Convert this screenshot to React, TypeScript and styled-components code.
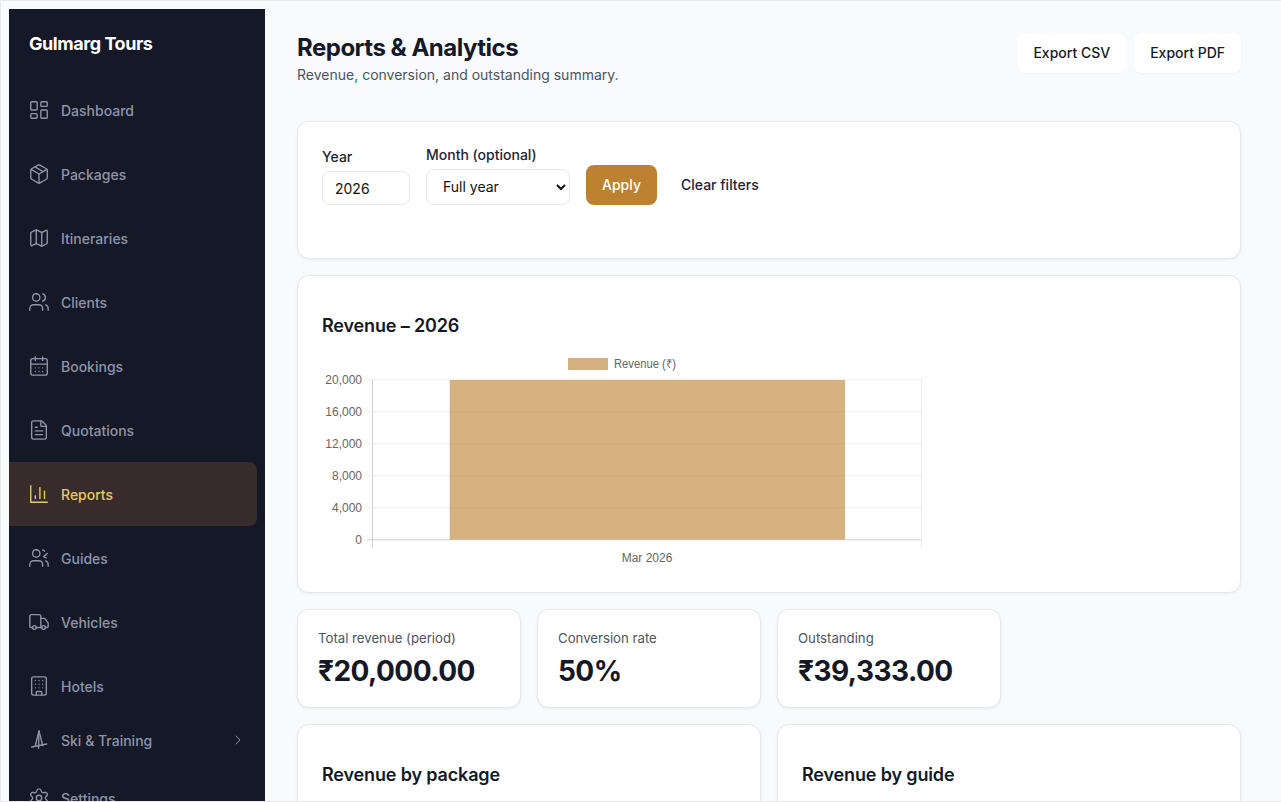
import React from 'react';
import styled, { createGlobalStyle } from 'styled-components';
import { LayoutDashboard, Package, Map, Users, CalendarDays, FileText, Truck, Building, ChevronRight, Settings } from 'lucide-react';

const Global = createGlobalStyle`
  html, body { margin: 0; height: 100%; overflow: hidden; }
  body { background: #fff; font-family: Inter, "Liberation Sans", sans-serif; color: #111827; }
  #root { height: 100%; }
`;
const Frame = styled.div`
  box-sizing: border-box; height: 802px; width: 1281px; overflow: hidden;
  border: solid #e5e7eb; border-width: 1px 0 1px 1px; padding: 8px 0 0 8px; display: flex; background: #f9fafb;
`;
const Sidebar = styled.aside`
  width: 256px; flex: none; background: #141827; height: 900px; display: flex; flex-direction: column;
`;
const Brand = styled.div`
  box-sizing: border-box; color: #fff; font-weight: 700; font-size: 18px; line-height: 28px; letter-spacing: -0.45px; padding: 21px 20px 0; height: 69px;
`;
const Nav = styled.nav`display: flex; flex-direction: column; padding-right: 8px;`;
const Item = styled.div<{ $active?: boolean; $short?: boolean }>`
  display: flex; align-items: center; gap: 12px; box-sizing: border-box;
  padding: 0 ${p => p.$short ? 11 : 20}px ${p => p.$short ? 4 : 0}px 20px;
  height: ${p => p.$short ? 48 : 64}px;
  font-size: 14px; font-weight: 500; color: ${p => p.$active ? '#e8cb63' : '#8f95a8'};
  background: ${p => p.$active ? '#372c2b' : 'transparent'};
  border-radius: 0 8px 8px 0;
  > svg { flex: none; margin: -1px; }
`;
const Label = styled.span`flex: 1;`;
const Chevron = styled(ChevronRight)`
  && { margin: 0; }
`;
const Main = styled.main`flex: 1; padding: 24px 40px 0 32px; background: #f9fafb; min-width: 0;`;
const Head = styled.header`display: flex; justify-content: space-between; align-items: flex-start; margin-bottom: 36px;`;
const Title = styled.h1`margin: 0; font-size: 24px; line-height: 30px; font-weight: 700; letter-spacing: -0.5px; color: #141827;`;
const Sub = styled.p`margin: 2px 0 0; font-size: 14px; line-height: 20px; color: #4b5563;`;
const Actions = styled.div`display: flex; gap: 8px;`;
const GhostBtn = styled.button`
  height: 40px; padding: 0 16px 1px; border: 0; border-radius: 8px; background: #fff; font: 500 14px Inter, sans-serif; color: #141827;
  box-shadow: 0 1px 2px rgba(0,0,0,.03);
`;
const Card = styled.section`
  box-sizing: border-box; background: #fff; border: 1px solid #e5e7eb; border-radius: 12px; box-shadow: 0 1px 3px rgba(0,0,0,.06);
`;
const FilterCard = styled(Card)`height: 138px; padding: 24px; display: flex; align-items: flex-start; gap: 16px; margin-bottom: 16px;`;
const Field = styled.label<{ $top: number }>`display: flex; flex-direction: column; gap: 4px; font-size: 14px; line-height: 20px; font-weight: 500; color: #1f2433; margin-top: ${p => p.$top}px;`;
const YearInput = styled.input`
  box-sizing: border-box; width: 88px; height: 34px; padding: 0 12px; border: 1px solid #e5e7eb; border-radius: 8px; font: 400 14px Inter, sans-serif; color: #111; background: #fff;
`;
const MonthSelect = styled.select`
  box-sizing: border-box; width: 144px; height: 36px; padding: 0 12px 1px; border: 1px solid #e5e7eb; border-radius: 8px; font: 400 14px Inter, sans-serif; color: #111; background: #fff;
`;
const Apply = styled.button`
  height: 40px; width: 71px; margin-top: 19px; padding: 0 0 1px; border: 0; border-radius: 8px; background: #bc8232; color: #fff; font: 500 14px Inter, sans-serif;
`;
const Clear = styled.button`
  height: 40px; margin-top: 19px; padding: 0 8px 2px; border: 0; background: transparent; color: #1f2433; font: 500 14px Inter, sans-serif;
`;
const ChartCard = styled(Card)`height: 318px; padding: 36px 24px 0; margin-bottom: 16px;`;
const CardTitle = styled.h2`margin: 0; font-size: 18px; line-height: 28px; font-weight: 600; letter-spacing: -0.15px; color: #141827;`;
const ChartSvg = styled.svg`display: block; margin: 15px 0 0 -2px; text { font-family: "Liberation Sans", Arial, sans-serif; font-size: 12px; fill: #666; }`;
const Stats = styled.div`display: flex; gap: 16px; margin-bottom: 16px;`;
const Stat = styled(Card)`width: 224px; height: 99px; padding: 19px 20px; `;
const StatLabel = styled.div`font-size: 13.2px; line-height: 18px; color: #4b5563; font-weight: 400;`;
const StatValue = styled.div`font-size: 28px; line-height: 36px; font-weight: 700; letter-spacing: -0.55px; color: #141827; margin-top: 6px;`;
const Bottom = styled.div`display: grid; grid-template-columns: 464px 464px; gap: 16px;`;
const BottomCard = styled(Card)`height: 200px; padding: 36px 24px;`;

const Ticks = [['20,000', 380], ['16,000', 412], ['12,000', 444], ['8,000', 476], ['4,000', 508], ['0', 540]] as const;
const Chart = () => (
  <ChartSvg width="620" height="210" viewBox="320 355 620 210">
    <rect x="568" y="358" width="40" height="12" fill="#d4b080" />
    <text x="614" y="368" textLength="62" lengthAdjust="spacingAndGlyphs">Revenue (₹)</text>
    {Ticks.map(([t, y]) => (
      <g key={t}>
        <line x1="367" x2="922" y1={y - .2} y2={y - .2} stroke={t === '0' ? '#cfcfcf' : '#ececec'} />
        <text x="362" y={y + 4} textAnchor="end">{t}</text>
      </g>
    ))}
    <line x1="372.5" x2="372.5" y1="380" y2="548" stroke="#cfcfcf" />
    <line x1="921.5" x2="921.5" y1="380" y2="548" stroke="#ececec" />
    <rect x="449.7" y="380" width="395.3" height="159.6" fill="#bc8232" fillOpacity=".62" />
    <text x="647" y="561.5" textAnchor="middle">Mar 2026</text>
  </ChartSvg>
);

const Svg = (props: { children: React.ReactNode }) => (
  <svg width="22" height="22" viewBox="0 0 24 24" fill="none" stroke="currentColor" strokeWidth="1.5" strokeLinecap="round" strokeLinejoin="round">{props.children}</svg>
);
const ReportsIcon = () => <Svg><path d="M3 3v18h18" /><path d="M18 17V9" /><path d="M13 17V5" /><path d="M8 17v-3" /></Svg>;
const GuidesIcon = () => (
  <Svg>
    <path d="M16 21v-2a4 4 0 0 0-4-4H6a4 4 0 0 0-4 4v2" />
    <circle cx="9" cy="7" r="4" />
    <path d="M22 21v-2a4 4 0 0 0-3-3.87" />
    <path d="M16 3.13a4 4 0 0 1 2 1.4" />
    <path d="M21 7l-4 3.5 3 1.5" />
  </Svg>
);
const SkiIcon = () => (
  <Svg>
    <path d="M12 2 8 18M12 2l4 16" />
    <path d="M12 2 11.5 21" />
    <path d="M4 19.6 20.4 16.4" />
  </Svg>
);

const icon = (I: typeof Package) => <I size={22} strokeWidth={1.5} />;
const items: [React.ReactNode, string][] = [
  [icon(LayoutDashboard), 'Dashboard'], [icon(Package), 'Packages'], [icon(Map), 'Itineraries'], [icon(Users), 'Clients'], [icon(CalendarDays), 'Bookings'], [icon(FileText), 'Quotations'], [<ReportsIcon />, 'Reports'], [<GuidesIcon />, 'Guides'], [icon(Truck), 'Vehicles'], [icon(Building), 'Hotels'],
];

export default function App() {
  return (
    <Frame>
      <Global />
      <Sidebar>
        <Brand>Gulmarg Tours</Brand>
        <Nav>
          {items.map(([I, t]) => (
            <Item key={t} $active={t === 'Reports'}>{I}<Label>{t}</Label></Item>
          ))}
          <Item $short><SkiIcon /><Label>Ski &amp; Training</Label><Chevron size={16} strokeWidth={1.5} /></Item>
          <Item>{icon(Settings)}<Label>Settings</Label></Item>
        </Nav>
      </Sidebar>
      <Main>
        <Head>
          <div><Title>Reports &amp; Analytics</Title><Sub>Revenue, conversion, and outstanding summary.</Sub></div>
          <Actions><GhostBtn>Export CSV</GhostBtn><GhostBtn>Export PDF</GhostBtn></Actions>
        </Head>
        <FilterCard>
          <Field $top={1}>Year<YearInput defaultValue="2026" /></Field>
          <Field $top={-1}>Month (optional)<MonthSelect><option>Full year</option></MonthSelect></Field>
          <Apply>Apply</Apply>
          <Clear>Clear filters</Clear>
        </FilterCard>
        <ChartCard>
          <CardTitle>Revenue – 2026</CardTitle>
          <Chart />
        </ChartCard>
        <Stats>
          <Stat><StatLabel>Total revenue (period)</StatLabel><StatValue>₹20,000.00</StatValue></Stat>
          <Stat><StatLabel>Conversion rate</StatLabel><StatValue>50%</StatValue></Stat>
          <Stat><StatLabel>Outstanding</StatLabel><StatValue>₹39,333.00</StatValue></Stat>
        </Stats>
        <Bottom>
          <BottomCard><CardTitle>Revenue by package</CardTitle></BottomCard>
          <BottomCard><CardTitle>Revenue by guide</CardTitle></BottomCard>
        </Bottom>
      </Main>
    </Frame>
  );
}
